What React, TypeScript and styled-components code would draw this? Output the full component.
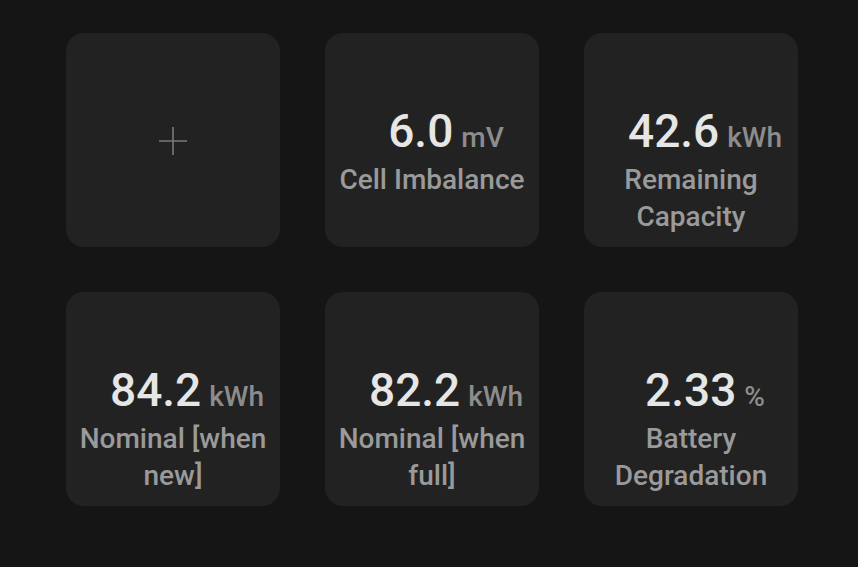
import React from 'react';
import styled, { createGlobalStyle } from 'styled-components';

const GlobalStyle = createGlobalStyle`
  html, body {
    margin: 0;
    padding: 0;
    background-color: #151515;
    font-family: Roboto, 'Noto Sans', sans-serif;
  }
`;

const Page = styled.div`
  width: 858px;
  height: 567px;
  box-sizing: border-box;
  padding: 33px 0 0 66px;
`;

const Grid = styled.div`
  display: grid;
  grid-template-columns: repeat(3, 214px);
  grid-auto-rows: 214px;
  column-gap: 45px;
  row-gap: 45px;
`;

const Card = styled.div<{ $center?: boolean }>`
  background-color: #222222;
  border-radius: 18px;
  display: flex;
  flex-direction: column;
  align-items: center;
  justify-content: ${({ $center }) => ($center ? 'center' : 'flex-start')};
  padding-top: ${({ $center }) => ($center ? '0' : '71px')};
  box-sizing: border-box;
`;

const ValueRow = styled.div`
  display: flex;
  align-items: baseline;
  gap: 8px;
  padding-left: 28px;
  line-height: 54px;
`;

const Value = styled.span`
  font-size: 46px;
  font-weight: 500;
  color: #e6e6e6;
`;

const Unit = styled.span`
  font-size: 28px;
  font-weight: 500;
  color: #8c8c8c;
`;

const Label = styled.div`
  margin-top: -4px;
  font-size: 28px;
  font-weight: 500;
  line-height: 37px;
  color: #9a9a9a;
  text-align: center;
  max-width: 200px;
`;

const AddButton = styled.button`
  background: none;
  border: none;
  padding: 0;
  margin-top: 2px;
  display: flex;
  cursor: pointer;
`;

interface Metric {
  value: string;
  unit: string;
  label: string;
}

const metrics: Metric[] = [
  { value: '6.0', unit: 'mV', label: 'Cell Imbalance' },
  { value: '42.6', unit: 'kWh', label: 'Remaining Capacity' },
  { value: '84.2', unit: 'kWh', label: 'Nominal [when new]' },
  { value: '82.2', unit: 'kWh', label: 'Nominal [when full]' },
  { value: '2.33', unit: '%', label: 'Battery Degradation' },
];

const App = () => {
  return (
    <>
      <GlobalStyle />
      <Page>
        <Grid>
          <Card $center>
            <AddButton aria-label="Add widget">
              <svg width="30" height="30" viewBox="0 0 30 30">
                <path d="M15 1v28M1 15h28" stroke="#7a7a7a" strokeWidth="1.6" fill="none" />
              </svg>
            </AddButton>
          </Card>
          {metrics.map(({ value, unit, label }) => (
            <Card key={label}>
              <ValueRow>
                <Value>{value}</Value>
                <Unit>{unit}</Unit>
              </ValueRow>
              <Label>{label}</Label>
            </Card>
          ))}
        </Grid>
      </Page>
    </>
  );
};

export default App;
